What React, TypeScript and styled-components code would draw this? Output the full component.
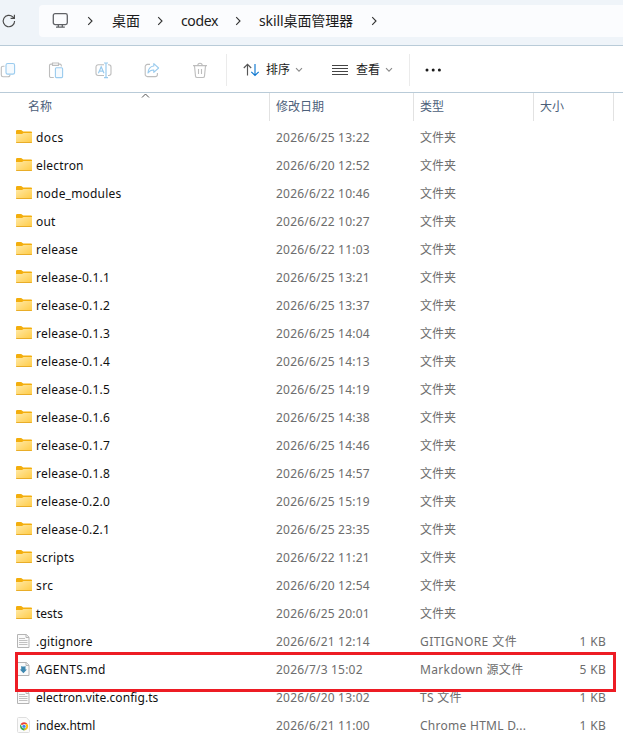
import React from 'react';
import styled, { createGlobalStyle } from 'styled-components';

const GlobalStyle = createGlobalStyle`
  * { box-sizing: border-box; }
  body {
    margin: 0;
    overflow: hidden;
    background: #fff;
    font-family: "Noto Sans", "Noto Sans CJK SC", sans-serif;
    font-size: 12px;
  }
`;

const Window = styled.div`
  position: relative;
  width: 623px;
  height: 734px;
  overflow: hidden;
  background: #fff;
`;

const AddressBar = styled.header`
  height: 46px;
  padding-top: 5px;
  display: flex;
  background: #eff4f9;
  border-bottom: 1px solid #b9cbd8;
`;

const RefreshSlot = styled.div`
  width: 39px;
  height: 32px;
  padding: 8px 0 0 1px;
`;

const PathBox = styled.nav`
  flex: 1;
  height: 32px;
  display: flex;
  align-items: center;
  background: #fbfcfe;
  border-radius: 4px 0 0 4px;
  padding-left: 13px;
`;

const PathIcon = styled.span`
  width: 35px;
  height: 18px;
  display: flex;
`;

const PathChevron = styled.span<{ $gap: number }>`
  width: 7px;
  display: flex;
  margin-right: ${(p) => p.$gap}px;
`;

const Crumb = styled.span<{ $width: number; $spacing?: number }>`
  width: ${(p) => p.$width}px;
  font-size: 14px;
  line-height: 20px;
  white-space: nowrap;
  color: #1b1b1b;
  letter-spacing: ${(p) => p.$spacing ?? 0}px;
`;

const Toolbar = styled.div`
  height: 47px;
  padding-top: 2px;
  display: flex;
  align-items: center;
  border-bottom: 1px solid #b9cbd8;
`;

const ToolButton = styled.button<{ $width: number }>`
  width: ${(p) => p.$width}px;
  height: 32px;
  padding: 0;
  border: 0;
  background: none;
  display: flex;
  align-items: center;
  flex: none;
  font: inherit;
  color: #1b1b1b;
`;

const ToolLabel = styled.span<{ $left: number }>`
  margin-left: ${(p) => p.$left}px;
  width: 29px;
  line-height: 18px;
  text-align: left;
`;

const Separator = styled.span<{ $right: number }>`
  width: 1px;
  height: 32px;
  background: #ebebeb;
  margin-right: ${(p) => p.$right}px;
`;

const columns = '269px 144px 120px 80px 10px';

const ColumnHeader = styled.div`
  position: relative;
  height: 27px;
  display: grid;
  grid-template-columns: ${columns};
`;

const HeaderCell = styled.div<{ $left: number; $divided?: boolean }>`
  padding-left: ${(p) => p.$left}px;
  border-left: ${(p) => (p.$divided ? '1px solid #e2e2e2' : '0')};
  line-height: 28px;
  color: #4c607a;
`;

const SortMark = styled.svg`
  position: absolute;
  left: 141px;
  top: 0;
`;

const List = styled.div`
  padding-top: 4px;
`;

const Row = styled.div`
  height: 28px;
  display: grid;
  grid-template-columns: 276px 144px 120px 66px;
  align-items: center;
  line-height: 20px;
  color: #6d6d6d;
`;

const Name = styled.div<{ $spacing: number }>`
  display: flex;
  align-items: center;
  padding-left: 15px;
  color: #111;
  white-space: nowrap;
  letter-spacing: ${(p) => p.$spacing}px;
  svg { margin: 0 4px 2px 0; flex: none; }
`;

const DateCell = styled.div`
  letter-spacing: 0.2px;
  white-space: nowrap;
`;

const TypeCell = styled.div<{ $spacing: number }>`
  white-space: nowrap;
  letter-spacing: ${(p) => p.$spacing}px;
`;

const SizeCell = styled.div`
  text-align: right;
  letter-spacing: 0.3px;
`;

const Highlight = styled.div`
  position: absolute;
  left: 15px;
  top: 652px;
  width: 601px;
  height: 40px;
  border: 3px solid #ed1c24;
`;

const Chevron = () => (
  <svg width="7" height="10" viewBox="0 0 7 10" fill="none" stroke="#333" strokeWidth="1.1">
    <path d="M1.2 1.2 5 5 1.2 8.8" />
  </svg>
);

const Caret = () => (
  <svg width="8" height="6" viewBox="0 0 8 6" fill="none" stroke="#8a8a8a" strokeWidth="1.1">
    <path d="M1 1.2 4 4.2 7 1.2" />
  </svg>
);

const Refresh = () => (
  <svg width="16" height="16" viewBox="0 0 16 16" fill="none" stroke="#4a4a4a" strokeWidth="1.15">
    <path d="M13.6 8A5.7 5.7 0 1 1 11.8 3.9L13 5.2M13.4 1.8V5.4H9.6" />
  </svg>
);

const Monitor = () => (
  <svg width="17" height="17" viewBox="0 0 17 17" fill="none" stroke="#606266" strokeWidth="1.3">
    <rect x="1.3" y="1.6" width="14" height="11" rx="1.8" />
    <path d="M6.3 12.8v2M10.3 12.8v2M4 15.2h8.8" />
  </svg>
);

const gray = '#bdbdbd';
const blue = '#9acbee';

const Copy = () => (
  <svg width="16" height="16" viewBox="0 0 16 16" fill="none" stroke={gray} strokeWidth="1.1">
    <path d="M4.5 4.2H3A1.7 1.7 0 0 0 1.3 6v7A1.7 1.7 0 0 0 3 14.7h5a2 2 0 0 0 2-2" />
    <rect x="6" y="1.5" width="8.6" height="10.6" rx="1.7" stroke={blue} fill="#f5fafe" />
  </svg>
);

const Paste = () => (
  <svg width="16" height="17" viewBox="0 0 16 17" fill="none" stroke={gray} strokeWidth="1.1">
    <path d="M5.8 15.5H3A1.5 1.5 0 0 1 1.5 14V3.6A1.5 1.5 0 0 1 3 2.1h1.5M10.5 2.1H12a1.4 1.4 0 0 1 1.3 1.5v1M4.5 1h6v2.4h-6z" />
    <rect x="7.4" y="5.8" width="7.2" height="9.8" rx="1" stroke={blue} fill="#f5fafe" />
  </svg>
);

const Rename = () => (
  <svg width="17" height="17" viewBox="0 0 17 17" fill="none" stroke={gray} strokeWidth="1.1">
    <path d="M9 13.5H3.2A2.2 2.2 0 0 1 1 11.3V5a2.2 2.2 0 0 1 2.2-2.2H9M13 2.8h.8A2.2 2.2 0 0 1 16 5v6.3a2.2 2.2 0 0 1-2.2 2.2H13" />
    <path d="M3.4 11.3 6.2 4.8 9 11.3M4.4 9.2H8M9 1h4M9 15.6h4M11 1v14.6" stroke={blue} strokeWidth="1.2" />
  </svg>
);

const Share = () => (
  <svg width="16" height="16" viewBox="0 0 16 16" fill="none" stroke={gray} strokeWidth="1.1">
    <path d="M6 2.4H3.4A2.2 2.2 0 0 0 1.2 4.6v7.8a2.2 2.2 0 0 0 2.2 2.2h7.8a2.2 2.2 0 0 0 2.2-2.2V11" />
    <path d="M9.8 1.6 14.6 6 9.8 10.3V8C7 7.8 5.4 9 4 11 4.2 7.2 6.2 4.4 9.8 4z" stroke={blue} strokeLinejoin="round" />
  </svg>
);

const Trash = () => (
  <svg width="16" height="17" viewBox="0 0 16 17" fill="none" stroke={gray} strokeWidth="1.1">
    <path d="M1 3.6h14M5.8 3.4a2.2 2.2 0 0 1 4.4 0M2.5 3.8l1 10.3a1.6 1.6 0 0 0 1.6 1.4h5.8a1.6 1.6 0 0 0 1.6-1.4l1-10.3M6.5 7v5M9.5 7v5" />
  </svg>
);

const Sort = () => (
  <svg width="17" height="14" viewBox="0 0 17 14" fill="none" strokeWidth="1.15">
    <path d="M4.5 12.5V1.5M.8 5 4.5 1.3 8.2 5" stroke="#555" />
    <path d="M12 1v11.5M8.3 8.8 12 12.5l3.7-3.7" stroke="#0f78d0" />
  </svg>
);

const Lines = () => (
  <svg width="16" height="12" viewBox="0 0 16 12" stroke="#454545" strokeWidth="1">
    <path d="M0 1.5h16M0 4.5h16M0 7.5h16M0 10.5h16" />
  </svg>
);

const Dots = () => (
  <svg width="17" height="4" viewBox="0 0 17 4" fill="#1b1b1b">
    <circle cx="2" cy="2" r="1.5" />
    <circle cx="8.2" cy="2" r="1.5" />
    <circle cx="14.4" cy="2" r="1.5" />
  </svg>
);

const Folder = () => (
  <svg width="17" height="16" viewBox="0 0 17 16">
    <defs>
      <linearGradient id="folderFace" x1="0" y1="0" x2="1" y2="1">
        <stop offset="0" stopColor="#ffe9a6" />
        <stop offset="1" stopColor="#ffcb45" />
      </linearGradient>
    </defs>
    <path d="M1 3V2.2Q1 1 2.2 1h4L8.2 2.6H16q1 0 1 1V7H1z" fill="#f3ae0d" />
    <path d="M1 5h6l1.5-1H17v9.2q0 .8-.8.8H1.8q-.8 0-.8-.8z" fill="url(#folderFace)" />
    <path d="M1 13h16q0 1-.8 1H1.8Q1 14 1 13z" fill="#e9ad28" />
  </svg>
);

const Sheet = () => (
  <>
    <path d="M2.5 1.5h8.8l2.7 2.7v10.3H2.5z" fill="#fafafa" stroke="#b4b4b4" />
    <path d="M11 1.5v3h3" fill="none" stroke="#b4b4b4" />
  </>
);

const TextFile = () => (
  <svg width="17" height="16" viewBox="0 0 17 16">
    <Sheet />
    <path d="M4 5.5h6M4 7.5h8.5M4 9.5h8.5M4 11.5h8.5" stroke="#b9b9b9" strokeWidth=".9" />
  </svg>
);

const MarkdownFile = () => (
  <svg width="17" height="16" viewBox="0 0 17 16">
    <Sheet />
    <path d="M6.2 5 7.3 5.6H9.4L10.5 5v3.4H12L8.4 12.2 4.8 8.4h1.4z" fill="#3f88b0" />
  </svg>
);

const HtmlFile = () => (
  <svg width="17" height="16" viewBox="0 0 17 16">
    <path d="M3.5 .5h7.8L14.5 3.8v10.7q0 1-1 1h-10q-1 0-1-1v-13q0-1 1-1z" fill="#fbfbfb" stroke="#dedede" />
    <path d="M9 9.3 5.5 7.2A4.1 4.1 0 0 1 12.6 7.3H9z" fill="#e94235" />
    <path d="M12.6 7.3A4.1 4.1 0 0 1 9 13.4L10.8 10.3 9 7.3z" fill="#fbbc05" />
    <path d="M5.5 7.2A4.1 4.1 0 0 0 9 13.4L10.8 10.3 7.2 10.3z" fill="#34a853" />
    <circle cx="9" cy="9.3" r="2.1" fill="#fff" />
    <circle cx="9" cy="9.3" r="1.6" fill="#4285f4" />
  </svg>
);

type Entry = {
  name: string;
  date: string;
  type?: string;
  size?: string;
  icon?: () => React.JSX.Element;
  spacing?: number;
  typeSpacing?: number;
};

const entries: Entry[] = [
  { name: 'docs', date: '2026/6/25 13:22', spacing: 0.4 },
  { name: 'electron', date: '2026/6/20 12:52' },
  { name: 'node_modules', date: '2026/6/22 10:46' },
  { name: 'out', date: '2026/6/22 10:27' },
  { name: 'release', date: '2026/6/22 11:03' },
  { name: 'release-0.1.1', date: '2026/6/25 13:21' },
  { name: 'release-0.1.2', date: '2026/6/25 13:37' },
  { name: 'release-0.1.3', date: '2026/6/25 14:04' },
  { name: 'release-0.1.4', date: '2026/6/25 14:13' },
  { name: 'release-0.1.5', date: '2026/6/25 14:19' },
  { name: 'release-0.1.6', date: '2026/6/25 14:38' },
  { name: 'release-0.1.7', date: '2026/6/25 14:46' },
  { name: 'release-0.1.8', date: '2026/6/25 14:57' },
  { name: 'release-0.2.0', date: '2026/6/25 15:19' },
  { name: 'release-0.2.1', date: '2026/6/25 23:35' },
  { name: 'scripts', date: '2026/6/22 11:21' },
  { name: 'src', date: '2026/6/20 12:54', spacing: 0.4 },
  { name: 'tests', date: '2026/6/25 20:01', spacing: 0 },
  { name: '.gitignore', date: '2026/6/21 12:14', type: 'GITIGNORE 文件', size: '1 KB', icon: TextFile, typeSpacing: 0.42 },
  { name: 'AGENTS.md', date: '2026/7/3 15:02', type: 'Markdown 源文件', size: '5 KB', icon: MarkdownFile, spacing: 0.3, typeSpacing: 0.35 },
  { name: 'electron.vite.config.ts', date: '2026/6/20 13:02', type: 'TS 文件', size: '1 KB', icon: TextFile, spacing: 0.05, typeSpacing: 0.3 },
  { name: 'index.html', date: '2026/6/21 11:00', type: 'Chrome HTML D...', size: '1 KB', icon: HtmlFile, spacing: -0.08, typeSpacing: 0.27 },
];

export default function App() {
  return (
    <Window>
      <GlobalStyle />
      <AddressBar>
        <RefreshSlot><Refresh /></RefreshSlot>
        <PathBox>
          <PathIcon><Monitor /></PathIcon>
          <PathChevron $gap={18}><Chevron /></PathChevron>
          <Crumb $width={45}>桌面</Crumb>
          <PathChevron $gap={17}><Chevron /></PathChevron>
          <Crumb $width={54} $spacing={-0.35}>codex</Crumb>
          <PathChevron $gap={17}><Chevron /></PathChevron>
          <Crumb $width={112} $spacing={-0.1}>skill桌面管理器</Crumb>
          <PathChevron $gap={0}><Chevron /></PathChevron>
        </PathBox>
      </AddressBar>
      <Toolbar>
        <ToolButton $width={48}><Copy /></ToolButton>
        <ToolButton $width={47}><Paste /></ToolButton>
        <ToolButton $width={49}><Rename /></ToolButton>
        <ToolButton $width={48}><Share /></ToolButton>
        <ToolButton $width={34}><Trash /></ToolButton>
        <Separator $right={16} />
        <ToolButton $width={89}><Sort /><ToolLabel $left={6}>排序</ToolLabel><Caret /></ToolButton>
        <ToolButton $width={77}><Lines /><ToolLabel $left={8}>查看</ToolLabel><Caret /></ToolButton>
        <Separator $right={15} />
        <ToolButton $width={32}><Dots /></ToolButton>
      </Toolbar>
      <ColumnHeader>
        <HeaderCell $left={28}>名称</HeaderCell>
        <HeaderCell $left={6} $divided>修改日期</HeaderCell>
        <HeaderCell $left={6} $divided>类型</HeaderCell>
        <HeaderCell $left={6} $divided>大小</HeaderCell>
        <HeaderCell $left={0} $divided />
        <SortMark width="9" height="6" viewBox="0 0 9 6" fill="none" stroke="#555">
          <path d="M1 4.5 4.5 1 8 4.5" />
        </SortMark>
      </ColumnHeader>
      <List>
        {entries.map(({ icon: Icon = Folder, ...e }) => (
          <Row key={e.name}>
            <Name $spacing={e.spacing ?? 0.2}><Icon />{e.name}</Name>
            <DateCell>{e.date}</DateCell>
            <TypeCell $spacing={e.typeSpacing ?? 0}>{e.type ?? '文件夹'}</TypeCell>
            <SizeCell>{e.size}</SizeCell>
          </Row>
        ))}
      </List>
      <Highlight />
    </Window>
  );
}
